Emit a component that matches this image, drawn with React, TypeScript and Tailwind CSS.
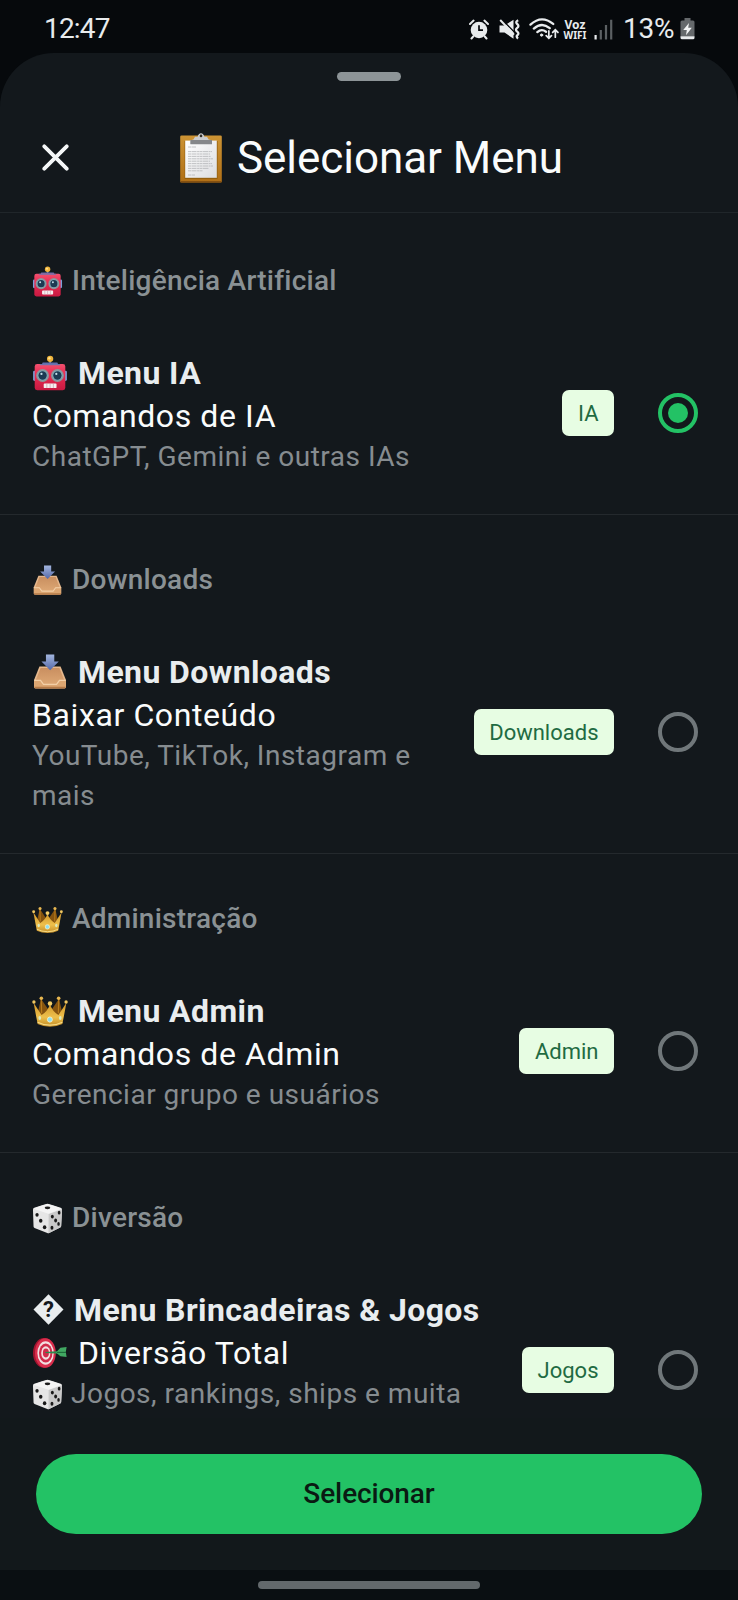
import type { ReactNode } from "react";

type IconProps = { className?: string };

function ClipboardEmoji({ className }: IconProps) {
  return (
    <svg viewBox="0 0 42 50" className={className}>
      <defs>
        <linearGradient id="board" x1="0" y1="0" x2="0" y2="1">
          <stop offset="0" stopColor="#cd9434" />
          <stop offset="1" stopColor="#b06f16" />
        </linearGradient>
        <linearGradient id="sheet" x1="0" y1="0" x2="1" y2="1">
          <stop offset="0" stopColor="#ffffff" />
          <stop offset="1" stopColor="#dcdde0" />
        </linearGradient>
      </defs>
      <rect x="0.2" y="2.4" width="41.6" height="47.2" rx="1.4" fill="url(#board)" />
      <rect x="0.2" y="48" width="41.6" height="1.6" rx="0.8" fill="#855010" />
      <rect x="4.6" y="8" width="33" height="38" fill="#95600f" />
      <rect x="5.2" y="7.6" width="31.6" height="37.2" fill="url(#sheet)" />
      <path d="M8 14h8M8 18.6h24M8 21h22M8 23.4h23M8 25.8h25M8 28.2h22M8 30.6h24M8 33h25M8 35.4h21M8 37.8h15M8 42h7" stroke="#b4b5b8" strokeWidth="0.8" strokeDasharray="3 .5 5 .6 2 .4" />
      <path d="M10.4 11V7.2l3-.6 1.6-2.8h2.600C18.200 1.400 19.400.2 21 .2s2.800 1.200 3.400 3.600H27l1.600 2.800 3.400.6V11z" fill="#c9cbce" />
      <path d="M10.400 7h21.600v4.200H10.400z" fill="#85878a" />
      <circle cx="21" cy="2.900" r="1.300" fill="#33302b" />
    </svg>
  );
}

function RobotEmoji({ className }: IconProps) {
  return (
    <svg viewBox="0 0 32 32" className={className}>
      <defs>
        <linearGradient id="robotHead" x1="0" y1="0" x2="0" y2="1">
          <stop offset="0" stopColor="#f2506e" />
          <stop offset="0.35" stopColor="#ea2f55" />
          <stop offset="1" stopColor="#c81941" />
        </linearGradient>
      </defs>
      <path d="M15.300 4h1.600v5h-1.600z" fill="#8c8f9e" />
      <circle cx="16.100" cy="3.400" r="2.800" fill="#f0b53c" />
      <circle cx="15.500" cy="2.800" r="1.100" fill="#ffdf8a" />
      <rect x="1" y="14" width="2.600" height="9" rx="1.200" fill="#7aa0d8" />
      <rect x="28.400" y="14" width="2.600" height="9" rx="1.200" fill="#7aa0d8" />
      <rect x="9" y="6.600" width="14" height="2" rx="1" fill="#5f6fae" />
      <rect x="2.400" y="8" width="27.200" height="23.400" rx="2.200" fill="url(#robotHead)" />
      <rect x="7" y="8" width="18" height="1" rx=".5" fill="#6d74ae" />
      <circle cx="9.400" cy="18.200" r="5.700" fill="#8b979c" />
      <circle cx="22.600" cy="18.200" r="5.700" fill="#8b979c" />
      <circle cx="9.400" cy="18.200" r="4.300" fill="#7fb2c4" />
      <circle cx="22.600" cy="18.200" r="4.300" fill="#7fb2c4" />
      <circle cx="9.400" cy="18.200" r="3.700" fill="#1c3a52" />
      <circle cx="22.600" cy="18.200" r="3.700" fill="#1c3a52" />
      <circle cx="8.400" cy="16.800" r="1" fill="#c5dfe9" />
      <circle cx="21.600" cy="16.800" r="1" fill="#c5dfe9" />
      <rect x="10.400" y="25.400" width="11.400" height="4" rx=".8" fill="#f6eef0" />
      <path d="M13.200 25.400v4M16.100 25.400v4M19 25.400v4" stroke="#c79aa6" strokeWidth=".6" />
    </svg>
  );
}

function InboxEmoji({ className }: IconProps) {
  return (
    <svg viewBox="0 0 32 32" className={className}>
      <defs>
        <linearGradient id="tray" x1="0" y1="0" x2="0" y2="1">
          <stop offset="0" stopColor="#c98f60" />
          <stop offset="1" stopColor="#dda774" />
        </linearGradient>
        <linearGradient id="arrow" x1="0" y1="0" x2="0" y2="1">
          <stop offset="0" stopColor="#a3b6df" />
          <stop offset="1" stopColor="#5468a8" />
        </linearGradient>
      </defs>
      <path d="M6.600 11.200h18.800L30.200 23v6.400q0 1.200-1.200 1.200H3q-1.200 0-1.200-1.200V23z" fill="#e6b88d" />
      <path d="M7.600 12.400h16.800l4.200 10.800h-4l-2.600 3.600H10l-2.600-3.600h-4z" fill="url(#tray)" />
      <path d="M2 23.600h5.600l2.600 3.600h11.600l2.600-3.600H30V30q-14 1-28 0z" fill="#dca672" />
      <path d="M2 23.400h5.600l2.600 3.600h11.600l2.600-3.600H30" fill="none" stroke="#f3cfa6" strokeWidth="1.100" />
      <path d="M2 29.200h28q0 1.400-1.200 1.400H3.200Q2 30.600 2 29.200z" fill="#b67b48" />
      <path d="M12.400.4h7.400v6.200h4L16.100 14.400 8.400 6.600h4z" fill="url(#arrow)" />
    </svg>
  );
}

function CrownEmoji({ className }: IconProps) {
  return (
    <svg viewBox="0 0 32 32" className={className}>
      <defs>
        <linearGradient id="gold" x1="0" y1="0" x2="0" y2="1">
          <stop offset="0" stopColor="#cf9326" />
          <stop offset="0.6" stopColor="#eec04c" />
          <stop offset="1" stopColor="#c08a25" />
        </linearGradient>
      </defs>
      <path d="M4.500 20 8 5l6 9h4l6-9 3.500 15-5 4H9.600z" fill="#85530f" />
      <path d="M1.400 8.600 8.500 19.500Q13.800 16.500 16 10q2.200 6.500 7.500 9.500L30.600 8.600 27 27.600Q22 30 16 30T5 27.600z" fill="url(#gold)" />
      <path d="M8.600 18 8.200 5M23.400 18l.4-13" stroke="#b87c1c" strokeWidth="1" />
      <path d="M5 26Q10 28.600 16 28.600T27 26" fill="none" stroke="#f8dc86" strokeWidth="1" />
      <circle cx="1.700" cy="8" r="1.500" fill="#f0c660" />
      <circle cx="30.300" cy="8" r="1.500" fill="#f0c660" />
      <circle cx="8.300" cy="4.600" r="1.600" fill="#e8b750" />
      <circle cx="23.700" cy="4.600" r="1.600" fill="#e8b750" />
      <circle cx="16" cy="9.400" r="2" fill="#f5d06a" />
      <ellipse cx="15.900" cy="23.600" rx="2.200" ry="2.300" fill="#8fe0f0" stroke="#fff6cf" strokeWidth=".7" />
      <ellipse cx="6.900" cy="22.200" rx="1.200" ry="1.800" fill="#dcebc0" />
      <ellipse cx="25.100" cy="22.200" rx="1.200" ry="1.800" fill="#dcebc0" />
    </svg>
  );
}

function DieEmoji({ className }: IconProps) {
  return (
    <svg viewBox="0 0 32 32" className={className}>
      <path d="M16 .8Q17 .8 29.600 4.800 31 5.400 31 7l-.9 16.800q-.1 1-1 1.500L17.800 31q-1 .5-2 0L2.600 25.800q-1-.5-1-1.500L1 7Q1 5.400 2.300 5 15 .8 16 .8z" fill="#e6e6e6" />
      <path d="M17.200 11.400 31 6.400l-.9 17.600q0 .8-1 1.300L17 31.200z" fill="#c9c9c9" />
      <path d="M1.400 6Q2 5 16 1q14 4 14.600 5L17 11.200z" fill="#f4f4f4" />
      <ellipse cx="16" cy="5" rx="2.900" ry="1.500" fill="#1c1c1c" />
      <g fill="#191919">
        <ellipse cx="5.200" cy="12.200" rx="1.700" ry="2" />
        <ellipse cx="9" cy="18.300" rx="1.800" ry="2.100" />
        <ellipse cx="13" cy="25" rx="1.800" ry="2.100" />
        <ellipse cx="21" cy="14" rx="1.500" ry="2" />
        <ellipse cx="28" cy="10" rx="1.400" ry="1.900" />
        <ellipse cx="24.400" cy="18" rx="1.500" ry="2" />
        <ellipse cx="20.600" cy="25.600" rx="1.500" ry="2" />
        <ellipse cx="27.400" cy="21.600" rx="1.300" ry="1.900" />
      </g>
    </svg>
  );
}

function TargetEmoji({ className }: IconProps) {
  return (
    <svg viewBox="0 0 36 32" className={className}>
      <ellipse cx="12" cy="16" rx="11" ry="15" fill="#a3142f" />
      <ellipse cx="13.400" cy="16" rx="10.400" ry="14.800" fill="#d92d4c" />
      <ellipse cx="13.600" cy="16" rx="8.200" ry="11.800" fill="#f3dfe1" />
      <ellipse cx="13.700" cy="16" rx="6.700" ry="9.600" fill="#d02c4b" />
      <ellipse cx="13.800" cy="16" rx="4.600" ry="6.700" fill="#f3dfe1" />
      <ellipse cx="13.900" cy="16" rx="3" ry="4.400" fill="#d02c4b" />
      <path d="M13.400 14.900 28 14v2.800l-14.600-.7z" fill="#2b8a4d" />
      <path d="M24 15.400 28.400 10.800l6.200-.8-.8 5 .8 5-6.200-.8z" fill="#41a862" />
      <path d="M25 15.400h9" stroke="#1f6a3b" strokeWidth="1.200" />
    </svg>
  );
}

function UnknownGlyph() {
  return (
    <span className="relative flex h-[31px] w-8 shrink-0 items-center justify-center">
      <svg viewBox="0 0 32 31" className="absolute inset-0 h-[31px] w-8">
        <path d="M16.500 .3 31.500 15.500 16.500 30.700 1.500 15.500z" fill="#e9edef" />
      </svg>
      <span className="relative pl-px text-[22px] leading-none font-bold tracking-normal text-[#13181c]">?</span>
    </span>
  );
}

function StatusBar() {
  return (
    <div className="flex h-[53px] shrink-0 items-center pt-[5px] pr-[43px] pl-[44px] text-[#e8ebed]">
      <span className="text-[28px] leading-8 tracking-[-0.8px]">12:47</span>
      <div className="ml-auto flex items-center">
        <svg viewBox="0 0 20 21" className="h-[21px] w-5">
          <circle cx="10" cy="11" r="8.300" fill="#e8ebed" />
          <path d="M1 5 4.600 1.600M19 5l-3.600-3.400M4.200 17.500l-1.700 2M15.800 17.500l1.700 2" stroke="#e8ebed" strokeWidth="2" strokeLinecap="round" />
          <path d="M10 6.200v5h4" fill="none" stroke="#06090c" strokeWidth="1.700" />
        </svg>
        <svg viewBox="0 0 21 21" className="ml-[10px] h-[21px] w-[21px]">
          <path d="M.5 6.500h5L14.500 .8v19l-9-6.300h-5z" fill="#e8ebed" />
          <path d="M3.300 .8 15 12.800" stroke="#06090c" strokeWidth="1.300" />
          <path d="M1.200 1 15 15.600" stroke="#e8ebed" strokeWidth="2" />
          <path d="M19.200 1.200q-3.400 1.800-1 3.800t0 3.800q-2.400 1.900 0 3.800t0 3.800q-1.200 1.300.8 3.200" fill="none" stroke="#e8ebed" strokeWidth="2.300" />
        </svg>
        <svg viewBox="0 0 31 23" className="mt-[-1px] ml-[9px] h-[23px] w-[30px]" fill="none" stroke="#e8ebed" strokeLinecap="round">
          <path d="M1.500 7.500Q13-3 25 6.800M5 11.600q8.200-7.200 16.400-.4M8.600 15.200q4.400-3.800 9-.4" strokeWidth="2.400" />
          <circle cx="13" cy="18.300" r="1.200" fill="#e8ebed" strokeWidth="1" />
          <path d="M20.500 14v7.300M17.800 18.900l2.700 2.700 2.700-2.700M27.200 20.500v-7.300M24.500 15.600l2.700-2.700 2.700 2.700" strokeWidth="1.800" />
        </svg>
        <div className="ml-[4px] flex w-[24px] flex-col items-center pt-px font-['Noto_Sans',sans-serif] font-bold whitespace-nowrap">
          <span className="text-[12px] leading-[11px]">Voz</span>
          <span className="text-[10px] leading-[10px]">WIFI</span>
        </div>
        <svg viewBox="0 0 19 21" className="ml-[7px] h-[21px] w-[19px]">
          <path d="M1.600 16v4.500" stroke="#e8ebed" strokeWidth="2.200" />
          <path d="M6.800 11v9.500M12 6v14.500M17.200 .8v19.700" stroke="#5b6063" strokeWidth="2.200" />
        </svg>
        <span className="ml-[10px] w-[54px] text-[28px] leading-8 tracking-[-0.2px]">13%</span>
        <svg viewBox="0 0 15 22" className="ml-[3px] h-[22px] w-[15px]">
          <path d="M4.500 0h6v3h-6zM2 2.500h11q1.500 0 1.500 1.500v14.500H.5V4Q.5 2.500 2 2.500z" fill="#65696c" />
          <path d="M.5 18.200h14v1.600q0 1.500-1.500 1.500H2q-1.500 0-1.500-1.500z" fill="#e8ebed" />
          <path d="M9 5 3.200 12h3.600L6 17.200l5.800-7.400H8.200z" fill="#f2f4f5" />
        </svg>
      </div>
    </div>
  );
}

type Section = {
  heading: string;
  Icon: (p: IconProps) => ReactNode;
  titleIcon: ReactNode;
  title: string;
  subtitleIcon?: ReactNode;
  subtitle: string;
  descIcon?: ReactNode;
  desc: string;
  badge: string;
  selected?: boolean;
  blockClass: string;
};

const large = "mr-[10px] h-[36px] w-[36px] shrink-0";

const sections: Section[] = [
  {
    heading: "Inteligência Artificial",
    Icon: RobotEmoji,
    titleIcon: <RobotEmoji className={large} />,
    title: "Menu IA",
    subtitle: "Comandos de IA",
    desc: "ChatGPT, Gemini e outras IAs",
    badge: "IA",
    selected: true,
    blockClass: "w-[400px] h-[131px]",
  },
  {
    heading: "Downloads",
    Icon: InboxEmoji,
    titleIcon: <InboxEmoji className={large} />,
    title: "Menu Downloads",
    subtitle: "Baixar Conteúdo",
    desc: "YouTube, TikTok, Instagram e mais",
    badge: "Downloads",
    blockClass: "w-[400px] h-[171px]",
  },
  {
    heading: "Administração",
    Icon: CrownEmoji,
    titleIcon: <CrownEmoji className={large} />,
    title: "Menu Admin",
    subtitle: "Comandos de Admin",
    desc: "Gerenciar grupo e usuários",
    badge: "Admin",
    blockClass: "w-[400px] h-[131px]",
  },
  {
    heading: "Diversão",
    Icon: DieEmoji,
    titleIcon: <span className="mr-[10px] flex"><UnknownGlyph /></span>,
    title: "Menu Brincadeiras & Jogos",
    subtitleIcon: <TargetEmoji className="mr-[10px] h-[32px] w-[36px] shrink-0" />,
    subtitle: "Diversão Total",
    descIcon: <DieEmoji className="mr-[8px] h-[31px] w-[31px] shrink-0" />,
    desc: "Jogos, rankings, ships e muita",
    badge: "Jogos",
    blockClass: "w-[460px] h-[171px]",
  },
];

function Radio({ selected }: { selected?: boolean }) {
  return selected ? (
    <span className="ml-[44px] flex size-10 items-center justify-center rounded-full border-4 border-[#23c265]">
      <span className="size-5 rounded-full bg-[#23c265]" />
    </span>
  ) : (
    <span className="ml-[44px] size-10 rounded-full border-4 border-[#70777a]" />
  );
}

function MenuSection({ s }: { s: Section }) {
  return (
    <section className="shrink-0 border-b border-[#24292d] pt-[45px] pb-9 pl-8">
      <h2 className="flex h-10 items-center text-[28px] font-medium tracking-[0.25px] whitespace-nowrap text-[#8a9194]">
        <s.Icon className="mr-[9px] h-[31px] w-[31px] shrink-0" />
        {s.heading}
      </h2>
      <div className="mt-[46px] flex items-center pr-10">
        <div className={`shrink-0 pt-[4px] ${s.blockClass}`}>
          <div className="flex h-[43px] items-center text-[32px] font-bold tracking-[0.4px] whitespace-nowrap text-[#e9edef]">
            {s.titleIcon}
            {s.title}
          </div>
          <div className="flex h-[43px] items-center text-[32px] tracking-[0.6px] whitespace-nowrap text-[#fafcfc]">
            {s.subtitleIcon}
            {s.subtitle}
          </div>
          <div className="flex items-center text-[28px] leading-10 tracking-[0.5px] text-[#868c90]">
            {s.descIcon}
            <span>{s.desc}</span>
          </div>
        </div>
        <span className="ml-auto flex h-[46px] items-center rounded-[7px] bg-[#e7fde3] px-[15.5px] pt-px text-[22px] text-[#1f6b42]">
          {s.badge}
        </span>
        <Radio selected={s.selected} />
      </div>
    </section>
  );
}

export default function App() {
  return (
    <div className="flex h-[1600px] w-[738px] flex-col overflow-hidden bg-[#06090c] font-[Roboto,sans-serif]">
      <StatusBar />
      <main className="flex min-h-0 flex-1 flex-col overflow-hidden rounded-t-[54px] bg-[#13181c]">
        <header className="h-[160px] shrink-0 border-b border-[#20262a] pt-[19px]">
          <div className="mx-auto h-[9px] w-16 rounded-full bg-[#8d9497]" />
          <div className="mt-[47px] flex h-[60px] items-center pl-[42px]">
            <svg viewBox="0 0 27 27" className="mb-[2px] size-[27px]">
              <path d="M2.300 2.300 24.700 24.700M24.700 2.300 2.300 24.700" stroke="#f5f7f8" strokeWidth="3.800" strokeLinecap="round" />
            </svg>
            <ClipboardEmoji className="ml-[111px] h-[50px] w-[42px]" />
            <h1 className="ml-[15px] text-[44px] leading-none tracking-[-0.05px] text-[#fafcfc]">Selecionar Menu</h1>
          </div>
        </header>
        <div className="flex min-h-0 flex-1 flex-col overflow-hidden pt-[3px]">
          {sections.map((s) => (
            <MenuSection key={s.heading} s={s} />
          ))}
        </div>
        <footer className="h-[152px] shrink-0 bg-[#12181b] px-9 pt-[36px]">
          <button className="h-20 w-full rounded-full bg-[#23c265] text-[28px] font-medium tracking-[-0.1px] text-[#0a1a12]">
            Selecionar
          </button>
        </footer>
      </main>
      <div className="flex h-[30px] shrink-0 justify-center bg-[#0a0f12] pt-[11px]">
        <div className="h-2 w-[222px] rounded-full bg-[#63696c]" />
      </div>
    </div>
  );
}
